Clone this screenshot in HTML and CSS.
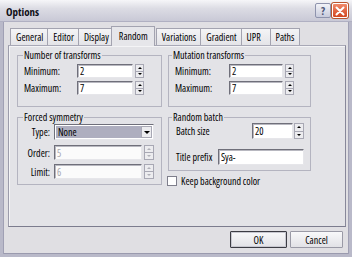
FILE: index.html
```html
<!DOCTYPE html>
<html lang="en">
<head>
  <meta charset="UTF-8" />
  <title>Options</title>
  <link rel="stylesheet" href="styles.css">
</head>
<body>
  <div class="window">
    <div class="titlebar">
      <span class="title">Options</span>
      <div class="caption-btns">
        <span class="cap-btn help">?</span>
        <span class="cap-btn close">
          <svg width="10" height="10" viewBox="0 0 10 10"><path d="M1.5 1.5 L8.5 8.5 M8.5 1.5 L1.5 8.5" stroke="#fff" stroke-width="2" stroke-linecap="round"/></svg>
        </span>
      </div>
    </div>

    <div class="body">
      <div class="tabs">
        <span class="tab">General</span>
        <span class="tab">Editor</span>
        <span class="tab">Display</span>
        <span class="tab active">Random</span>
        <span class="tab">Variations</span>
        <span class="tab">Gradient</span>
        <span class="tab">UPR</span>
        <span class="tab">Paths</span>
      </div>

      <div class="panel">
        <div class="groups">
          <fieldset class="group group-num">
            <legend>Number of transforms</legend>
            <div class="row">
              <label class="lbl">Minimum:</label>
              <input class="edit" type="text" value="2">
              <span class="spin"><span class="spin-up"></span><span class="spin-down"></span></span>
            </div>
            <div class="row">
              <label class="lbl">Maximum:</label>
              <input class="edit" type="text" value="7">
              <span class="spin"><span class="spin-up"></span><span class="spin-down"></span></span>
            </div>
          </fieldset>

          <fieldset class="group group-mut">
            <legend>Mutation transforms</legend>
            <div class="row">
              <label class="lbl">Minimum:</label>
              <input class="edit" type="text" value="2">
              <span class="spin"><span class="spin-up"></span><span class="spin-down"></span></span>
            </div>
            <div class="row">
              <label class="lbl">Maximum:</label>
              <input class="edit" type="text" value="7">
              <span class="spin"><span class="spin-up"></span><span class="spin-down"></span></span>
            </div>
          </fieldset>

          <fieldset class="group group-sym">
            <legend>Forced symmetry</legend>
            <div class="row row-combo">
              <label class="lbl">Type:</label>
              <div class="combo">
                <span class="combo-text">None</span>
                <span class="combo-btn"></span>
              </div>
            </div>
            <div class="row row-dis">
              <label class="lbl">Order:</label>
              <input class="edit" type="text" value="5" disabled>
              <span class="spin spin-off"><span class="spin-up"></span><span class="spin-down"></span></span>
            </div>
            <div class="row row-dis">
              <label class="lbl">Limit:</label>
              <input class="edit" type="text" value="6" disabled>
              <span class="spin spin-off"><span class="spin-up"></span><span class="spin-down"></span></span>
            </div>
          </fieldset>

          <div class="side">
            <fieldset class="group group-batch">
              <legend>Random batch</legend>
              <div class="row row-batch">
                <label class="lbl">Batch size</label>
                <span class="edit-wrap">
                  <input class="edit" type="text" value="20">
                  <span class="spin"><span class="spin-up"></span><span class="spin-down"></span></span>
                </span>
              </div>
              <div class="row row-prefix">
                <label class="lbl">Title prefix</label>
                <input class="edit" type="text" value="Sya-">
              </div>
            </fieldset>
            <div class="check">
              <span class="check-box"></span>
              <span class="check-text">Keep background color</span>
            </div>
          </div>
        </div>
      </div>

      <div class="actions">
        <button class="btn btn-default">OK</button>
        <button class="btn">Cancel</button>
      </div>
    </div>
  </div>
</body>
</html>
```

FILE: styles.css
```css
html, body {
  margin: 0;
  padding: 0;
  width: 352px;
  height: 257px;
  overflow: hidden;
  background: #e0dfe3;
}

.window {
  box-sizing: border-box;
  width: 352px;
  height: 257px;
  display: flex;
  flex-direction: column;
  border: 3px solid #b9b9c9;
  border-top: none;
  box-shadow: inset 1px 0 0 #a0a0b4, inset -1px 0 0 #a0a0b4, inset 0 -1px 0 #9a9aae;
  font-family: "Open Sans", "Liberation Sans", sans-serif;
  font-stretch: 75%;
  font-size: 10px;
  color: #000;
  background: #e0dfe3;
}

/* title bar */
.titlebar {
  height: 22px;
  margin: 0 -3px;
  display: flex;
  align-items: center;
  justify-content: space-between;
  padding: 0 4px 0 6px;
  background: linear-gradient(#f6f6f9, #dcdce4 40%, #c9c9d6);
  border-bottom: 1px solid #b0b0c2;
  box-sizing: border-box;
}

.title {
  font-weight: bold;
  font-size: 11px;
  color: #101018;
  padding-top: 2px;
}

.caption-btns {
  display: flex;
  gap: 1px;
}

.cap-btn {
  width: 16px;
  height: 15px;
  border-radius: 2px;
  display: flex;
  align-items: center;
  justify-content: center;
  box-sizing: border-box;
}

.help {
  background: linear-gradient(#f2f3f8, #c8cbdc);
  border: 1px solid #8e93ad;
  color: #4b5274;
  font-weight: bold;
  font-size: 11px;
}

.close {
  background: linear-gradient(#f08a6c, #d3461f);
  border: 1px solid #fff;
  box-shadow: 0 0 0 1px #b9552f;
}

/* body */
.body {
  flex: 1;
  display: flex;
  flex-direction: column;
  padding: 4px 3px 6px 5px;
}

.tabs {
  height: 19px;
  display: flex;
  align-items: flex-end;
  padding-left: 2px;
}

.tab {
  box-sizing: border-box;
  height: 17px;
  min-width: 30px;
  padding: 0 4px 0 5px;
  display: flex;
  align-items: center;
  background: linear-gradient(#f4f4f6, #e4e4e8);
  border: 1px solid #a3a3b0;
  border-bottom: none;
  margin-right: -1px;
}

.tab.active {
  height: 20px;
  margin: 0 1px -1px -2px;
  padding: 0 6px 1px 7px;
  background: #e6e6ea;
  position: relative;
  z-index: 1;
}

.panel {
  height: 182px;
  box-sizing: border-box;
  border: 1px solid #9c9cab;
  border-top-color: #a8a8b6;
  border-right-color: #88889a;
  border-bottom-color: #7c7c8e;
  box-shadow: inset 1px 1px 0 #f4f4f6;
  background: #e3e3e7;
  padding: 3px 0 0 8px;
}

.groups {
  display: grid;
  grid-template-columns: 145px 143px;
  column-gap: 6px;
  row-gap: 4px;
  align-items: start;
}

.group {
  margin: 0;
  border: 1px solid #b4b4c0;
  padding: 0;
  min-width: 0;
}

.group legend {
  padding: 0 1px;
  line-height: 12px;
}

.row {
  display: flex;
  align-items: center;
}

.lbl {
  flex: none;
  white-space: nowrap;
}

.edit {
  flex: none;
  box-sizing: border-box;
  margin: 0;
  padding: 0 2px;
  font: inherit;
  color: #000;
  background: #fff;
  border: 1px solid;
  border-color: #6f6f7a #e6e6ea #e6e6ea #6f6f7a;
  box-shadow: inset 1px 1px 0 #b8b8c0;
  outline: none;
}

.spin {
  flex: none;
  display: flex;
  flex-direction: column;
  margin-left: 2px;
  width: 9px;
  height: 14px;
}

.spin-up, .spin-down {
  flex: 1;
  display: flex;
  align-items: center;
  justify-content: center;
  box-sizing: border-box;
  background: #ececef;
  border: 1px solid #a8a8b4;
}

.spin-down {
  border-top: none;
}

.spin-up::after, .spin-down::after {
  content: "";
  border-left: 2px solid transparent;
  border-right: 2px solid transparent;
}

.spin-up::after {
  border-bottom: 2px solid #000;
}

.spin-down::after {
  border-top: 2px solid #000;
}

.spin-off .spin-up::after {
  border-bottom-color: #b0b0b8;
}

.spin-off .spin-down::after {
  border-top-color: #b0b0b8;
}

/* number of transforms / mutation */
.group-num, .group-mut {
  padding: 3px 0 11px 6px;
  height: 58px;
  box-sizing: border-box;
}

.group-num legend {
  margin-left: -1px;
}

.group-mut legend {
  margin-left: -3px;
}

.group-num .row, .group-mut .row {
  height: 14px;
}

.group-num .row + .row, .group-mut .row + .row {
  margin-top: 3px;
}

.group-num .lbl {
  width: 53px;
}

.group-num .edit {
  width: 56px;
  height: 14px;
}

.group-mut .lbl {
  width: 54px;
}

.group-mut .edit {
  width: 54px;
  height: 14px;
}

/* forced symmetry */
.group-sym {
  padding: 1px 0 5px 0;
}

.group-sym legend {
  margin-left: 5px;
}

.group-sym .lbl {
  width: 32px;
  text-align: right;
  margin-right: 4px;
}

.row-combo {
  height: 16px;
}

.combo {
  box-sizing: border-box;
  width: 100px;
  height: 16px;
  display: flex;
  align-items: stretch;
  background: #fff;
  border: 1px solid;
  border-color: #6f6f7a #e6e6ea #e6e6ea #6f6f7a;
  padding: 1px;
}

.combo-text {
  flex: 1;
  background: #aeaebf;
  padding-left: 2px;
  display: flex;
  align-items: center;
}

.combo-btn {
  width: 11px;
  display: flex;
  align-items: center;
  justify-content: center;
  background: #ececef;
  border: 1px solid #a8a8b4;
  box-sizing: border-box;
}

.combo-btn::after {
  content: "";
  border-left: 3px solid transparent;
  border-right: 3px solid transparent;
  border-top: 3px solid #000;
}

.row-dis {
  height: 15px;
  margin-top: 5px;
}

.row-dis + .row-dis {
  margin-top: 4px;
}

.row-dis .edit {
  width: 88px;
  height: 15px;
  color: #a8a8b0;
  background: #fbfbfb;
}

.row-dis .spin {
  width: 10px;
  height: 15px;
}

/* random batch */
.side {
  width: 143px;
  display: flex;
  flex-direction: column;
  align-items: flex-start;
}

.group-batch {
  align-self: stretch;
  padding: 0 6px 5px 7px;
}

.group-batch legend {
  margin-left: -4px;
}

.row-batch, .row-prefix {
  height: 16px;
  justify-content: space-between;
}

.row-prefix {
  margin-top: 10px;
}

.edit-wrap {
  display: flex;
}

.row-batch .edit {
  width: 41px;
  height: 16px;
}

.row-batch .spin {
  width: 10px;
  height: 16px;
  margin-left: 1px;
}

.row-prefix .edit {
  width: 86px;
  height: 16px;
}

.check {
  display: flex;
  align-items: center;
  height: 11px;
  margin: 4px 0 0 -1px;
}

.check-box {
  flex: none;
  width: 10px;
  height: 10px;
  box-sizing: border-box;
  background: #fff;
  border: 1px solid #7f7f8c;
  margin-right: 4px;
}

.check-text {
  white-space: nowrap;
}

/* buttons */
.actions {
  display: flex;
  justify-content: flex-end;
  gap: 3px;
  margin-top: 4px;
  padding-right: 3px;
}

.btn {
  height: 17px;
  width: 53px;
  padding: 0;
  font: inherit;
  color: #000;
  background: linear-gradient(#f8f8fa, #e2e2e6);
  border: 1px solid #9a9aa6;
  border-radius: 1px;
}

.btn-default {
  width: 57px;
  border-color: #3c3c44;
  box-shadow: inset 0 0 0 1px #c8c8d0;
}
```
